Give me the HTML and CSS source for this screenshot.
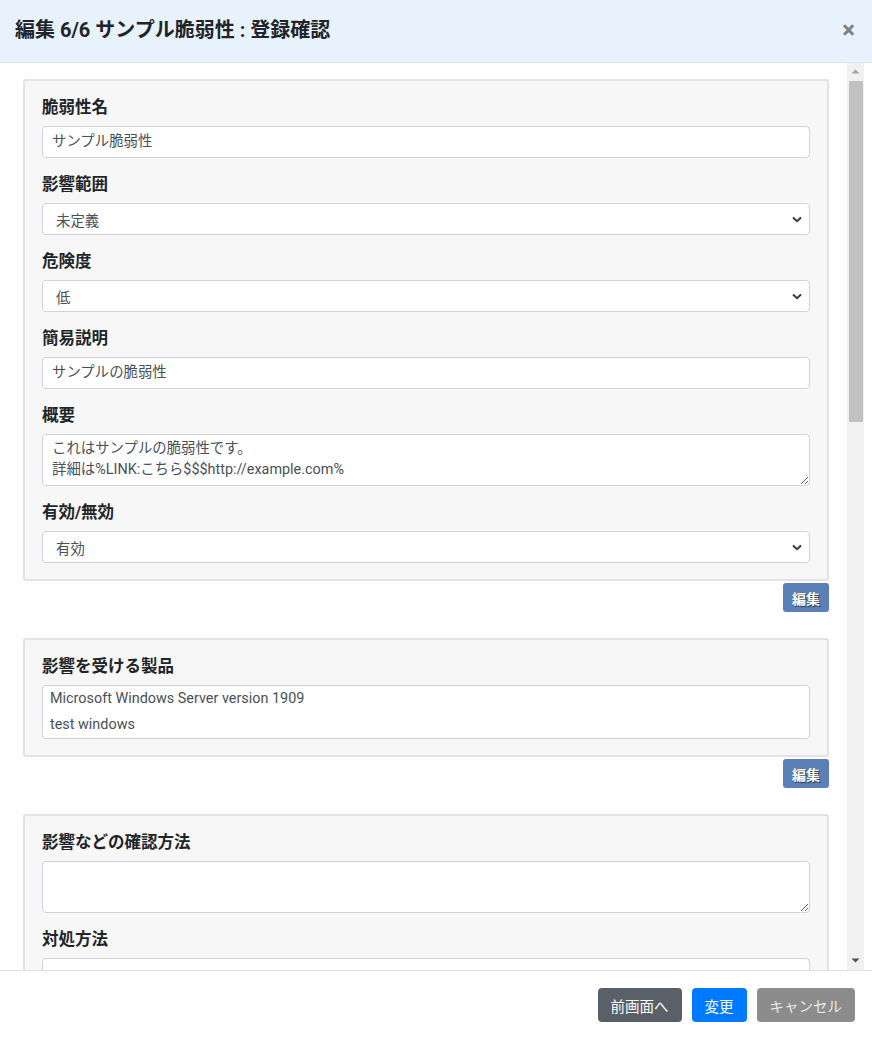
FILE: index.html
```html
<!DOCTYPE html>
<html lang="ja">
<head>
<meta charset="utf-8">
<title>編集 6/6</title>
<link rel="stylesheet" href="styles.css">
</head>
<body>
<div class="modal">
  <header class="modal-header">
    <h5 class="modal-title">編集 6/6 サンプル脆弱性 : 登録確認</h5>
    <span class="close">×</span>
  </header>
  <div class="modal-main">
    <div class="modal-body">
      <section class="card">
        <div class="group">
          <label class="label">脆弱性名</label>
          <div class="input">サンプル脆弱性</div>
        </div>
        <div class="group">
          <label class="label">影響範囲</label>
          <div class="select"><span>未定義</span><svg class="chev" width="10" height="7" viewBox="0 0 10 7"><path d="M1 1.5 L5 5.2 L9 1.5" fill="none" stroke="#343a40" stroke-width="2"/></svg></div>
        </div>
        <div class="group">
          <label class="label">危険度</label>
          <div class="select"><span>低</span><svg class="chev" width="10" height="7" viewBox="0 0 10 7"><path d="M1 1.5 L5 5.2 L9 1.5" fill="none" stroke="#343a40" stroke-width="2"/></svg></div>
        </div>
        <div class="group">
          <label class="label">簡易説明</label>
          <div class="input">サンプルの脆弱性</div>
        </div>
        <div class="group">
          <label class="label">概要</label>
          <textarea class="textarea" readonly>これはサンプルの脆弱性です。
詳細は%LINK:こちら$$$http://example.com%</textarea>
        </div>
        <div class="group">
          <label class="label">有効/無効</label>
          <div class="select"><span>有効</span><svg class="chev" width="10" height="7" viewBox="0 0 10 7"><path d="M1 1.5 L5 5.2 L9 1.5" fill="none" stroke="#343a40" stroke-width="2"/></svg></div>
        </div>
      </section>
      <div class="edit-row"><button class="btn-edit">編集</button></div>

      <section class="card">
        <div class="group">
          <label class="label">影響を受ける製品</label>
          <div class="list">
            <div class="list-item">Microsoft Windows Server version 1909</div>
            <div class="list-item">test windows</div>
          </div>
        </div>
      </section>
      <div class="edit-row"><button class="btn-edit">編集</button></div>

      <section class="card">
        <div class="group">
          <label class="label">影響などの確認方法</label>
          <textarea class="textarea" readonly></textarea>
        </div>
        <div class="group">
          <label class="label">対処方法</label>
          <div class="input"></div>
        </div>
      </section>
    </div>
    <div class="scrollbar">
      <div class="sb-btn"><svg width="9" height="5" viewBox="0 0 9 5"><path d="M0.5 4.5 L4.5 0.5 L8.5 4.5 Z" fill="#a3a3a3"/></svg></div>
      <div class="sb-track"><div class="sb-thumb"></div></div>
      <div class="sb-btn"><svg width="9" height="5" viewBox="0 0 9 5"><path d="M0.5 0.5 L4.5 4.5 L8.5 0.5 Z" fill="#505050"/></svg></div>
    </div>
  </div>
  <footer class="modal-footer">
    <button class="btn btn-back">前画面へ</button>
    <button class="btn btn-primary">変更</button>
    <button class="btn btn-cancel">キャンセル</button>
  </footer>
</div>
</body>
</html>
```

FILE: styles.css
```css
* { box-sizing: border-box; }
html, body { margin: 0; padding: 0; }
body {
  font-family: Roboto, "Noto Sans CJK JP", sans-serif;
  color: #212529;
  background: #fff;
}
.modal {
  display: flex;
  flex-direction: column;
  height: 1039px;
  width: 872px;
  overflow: hidden;
}
.modal-header {
  height: 63px;
  flex: 0 0 63px;
  background: #e8f2fd;
  border-bottom: 1px solid #dfe6ee;
  display: flex;
  align-items: center;
  justify-content: space-between;
  padding: 0 15px 2px 15px;
}
.modal-title {
  margin: 0;
  font-size: 20px;
  font-weight: 700;
  line-height: 24px;
  color: #212529;
}
.close {
  font-size: 24px;
  font-weight: 700;
  line-height: 24px;
  color: #808080;
  margin-right: 2px;
}
.modal-main {
  flex: 1 1 auto;
  display: flex;
  overflow: hidden;
  padding-right: 8px;
}
.modal-body {
  flex: 1 1 auto;
  overflow: hidden;
  padding: 16px 18px 0 23px;
}
.card {
  background: #f7f7f7;
  border: 2px solid #e3e3e3;
  border-radius: 3px;
  padding: 16px 17px;
}
.group { margin-bottom: 16px; }
.group:last-child { margin-bottom: 0; }
.label {
  display: block;
  font-size: 16.5px;
  line-height: 21px;
  font-weight: 700;
  margin-bottom: 8px;
  color: #212529;
}
.input, .select, .textarea, .list {
  background: #fff;
  border: 1px solid #ced4da;
  border-radius: 4px;
  color: #495057;
  font-size: 14.4px;
}
.input {
  height: 32px;
  line-height: 30px;
  padding: 0 9px;
}
.select {
  height: 32px;
  padding: 0 7px 0 13px;
  display: flex;
  align-items: center;
  justify-content: space-between;
}
.chev { display: block; }
.textarea {
  display: block;
  width: 100%;
  height: 52px;
  padding: 3px 9px;
  font-family: Roboto, "Noto Sans CJK JP", sans-serif;
  line-height: 21px;
  resize: vertical;
  outline: none;
}
.list { padding: 0; }
.list-item {
  line-height: 20px;
  padding: 3px 7px;
}
.edit-row {
  display: flex;
  justify-content: flex-end;
  margin: 2px 0 26px;
}
.btn-edit {
  height: 29px;
  width: 46px;
  padding: 0;
  border: none;
  border-radius: 3px;
  background: #5a80b6;
  color: #fff;
  font-family: Roboto, "Noto Sans CJK JP", sans-serif;
  font-size: 14px;
  font-weight: 700;
  text-shadow: 1px 1px 1px #333;
}
.scrollbar {
  flex: 0 0 17px;
  width: 17px;
  background: #f1f1f1;
  display: flex;
  flex-direction: column;
  padding-bottom: 1px;
}
.sb-btn {
  height: 17px;
  flex: 0 0 17px;
  display: flex;
  align-items: center;
  justify-content: center;
}
.sb-track {
  flex: 1 1 auto;
  padding: 1px 1px 0 2px;
}
.sb-thumb {
  height: 341px;
  background: #c1c1c1;
}
.modal-footer {
  flex: 0 0 69px;
  border-top: 1px solid #dee2e6;
  display: flex;
  align-items: center;
  justify-content: flex-end;
  gap: 10px;
  padding: 0 17px 0 0;
}
.btn {
  height: 34px;
  padding: 0 13px;
  border: none;
  border-radius: 4px;
  font-family: Roboto, "Noto Sans CJK JP", sans-serif;
  font-size: 14.5px;
  color: #fff;
}
.btn-back { background: #5a6068; }
.btn-primary { background: #007bff; }
.btn-cancel { background: #8c8c8c; color: #eaeaea; }
```
